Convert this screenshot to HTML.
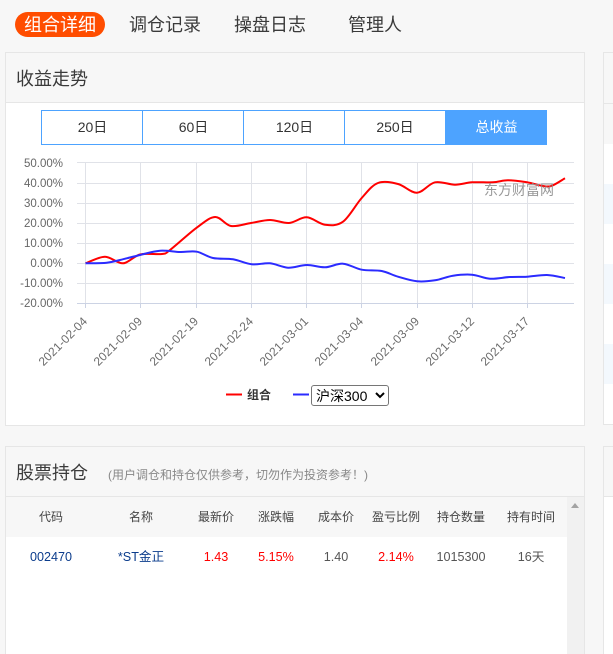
<!DOCTYPE html>
<html lang="zh-CN">
<head>
<meta charset="utf-8">
<title>组合详细</title>
<style>
html,body{margin:0;padding:0;width:613px;height:654px;overflow:hidden;}
body{background:#f7f7f7;font-family:"Liberation Sans","Noto Sans CJK SC",sans-serif;color:#333;}
#wrap{position:relative;width:613px;height:654px;overflow:hidden;background:#f7f7f7;}
.a{position:absolute;white-space:nowrap;}
.tab{font-size:18px;line-height:25px;top:13px;color:#3a3a3a;}
.pill{left:15px;top:12px;width:90px;height:25px;background:#ff4d00;border-radius:13px;color:#fff;text-align:center;font-size:18px;line-height:25px;}
.pill span{position:relative;top:1px;}
.panel{box-sizing:border-box;border:1px solid #e6e6e6;background:#fff;}
.head{background:#f7f7f7;}
.line{background:#e6e6e6;height:1px;}
.title{font-size:18px;line-height:26px;color:#3a3a3a;}
.btn{box-sizing:border-box;top:110px;height:35px;border:1px solid #4da3ff;border-right:none;text-align:center;font-size:14px;line-height:33px;color:#333;background:#fff;}
.th,.td{transform:translateX(-50%);line-height:16px;}
.th{top:509px;color:#444;font-size:12px;}
.td{top:549px;color:#555;font-size:12.6px;}
.red{color:#f00;}
.blue{color:#0b3c8c;}
svg text{font-family:"Liberation Sans","Noto Sans CJK SC",sans-serif;}
</style>
</head>
<body>
<div id="wrap">
<div class="a pill"><span>组合详细</span></div>
<div class="a tab" style="left:129px">调仓记录</div>
<div class="a tab" style="left:234px">操盘日志</div>
<div class="a tab" style="left:348px">管理人</div>

<!-- panel 1 -->
<div class="a panel" style="left:5px;top:52px;width:580px;height:374px"></div>
<div class="a head" style="left:6px;top:53px;width:578px;height:49px"></div>
<div class="a line" style="left:6px;top:102px;width:578px"></div>
<div class="a title" style="left:16px;top:66px">收益走势</div>

<div class="a btn" style="left:41px;width:102px">20日</div>
<div class="a btn" style="left:142px;width:102px">60日</div>
<div class="a btn" style="left:243px;width:102px">120日</div>
<div class="a btn" style="left:344px;width:102px;border-right:1px solid #4da3ff">250日</div>
<div class="a btn" style="left:446px;width:101px;background:#4da3ff;color:#fff;border:none;line-height:35px">总收益</div>

<svg class="a" style="left:0;top:150px" width="585" height="270" viewBox="0 150 585 270">
  <g stroke="#e0e2e8" stroke-width="1" fill="none" shape-rendering="crispEdges">
    <path d="M77 162.5H574M77 183.5H574M77 203.5H574M77 223.5H574M77 243.5H574M77 263.5H574M77 283.5H574"/>
    <path d="M85.5 162V303M140.5 162V303M196.5 162V303M251.5 162V303M306.5 162V303M361.5 162V303M417.5 162V303M472.5 162V303M527.5 162V303"/>
  </g>
  <g stroke="#ccd3e4" stroke-width="1" fill="none" shape-rendering="crispEdges">
    <path d="M77 303.5H574"/>
    <path d="M85.5 303V308M140.5 303V308M196.5 303V308M251.5 303V308M306.5 303V308M361.5 303V308M417.5 303V308M472.5 303V308M527.5 303V308"/>
  </g>
  <g font-size="11.5" fill="#666" text-anchor="end">
    <text x="63" y="167">50.00%</text>
    <text x="63" y="187">40.00%</text>
    <text x="63" y="207">30.00%</text>
    <text x="63" y="227">20.00%</text>
    <text x="63" y="247">10.00%</text>
    <text x="63" y="267">0.00%</text>
    <text x="63" y="287">-10.00%</text>
    <text x="63" y="307">-20.00%</text>
  </g>
  <g font-size="12" fill="#6c6c6c" text-anchor="end">
    <text transform="translate(88,322) rotate(-45)" textLength="63">2021-02-04</text>
    <text transform="translate(143,322) rotate(-45)" textLength="63">2021-02-09</text>
    <text transform="translate(199,322) rotate(-45)" textLength="63">2021-02-19</text>
    <text transform="translate(254,322) rotate(-45)" textLength="63">2021-02-24</text>
    <text transform="translate(309,322) rotate(-45)" textLength="63">2021-03-01</text>
    <text transform="translate(364,322) rotate(-45)" textLength="63">2021-03-04</text>
    <text transform="translate(420,322) rotate(-45)" textLength="63">2021-03-09</text>
    <text transform="translate(475,322) rotate(-45)" textLength="63">2021-03-12</text>
    <text transform="translate(530,322) rotate(-45)" textLength="63">2021-03-17</text>
  </g>
  <path id="r" fill="none" stroke="#ff0000" stroke-width="2" stroke-linejoin="round" d="M85.5 263.3L105 256.7L123 263.3L140 254.5L162 254L170 250L196.7 227.7L215 217L231 226L251 223L270 220L289 223L306.7 217.3L325 224.7L343 221.7L361.7 198L378 183L398 184L417 192.7L435 182.3L455 184.7L472 182.3L493 182.3L508 180.3L527 182.3L543 186L552 185.7L565 178.3"/>
  <path id="b" fill="none" stroke="#2b2bff" stroke-width="2" stroke-linejoin="round" d="M85.5 263.3L106.7 262.7L120 260L140 255L160 250.7L180 252L196.7 251.7L213 258L233 259.3L251.7 264.3L270 263.3L288 267.7L306.7 265L325 267.3L343 263.7L361.7 269.7L381.7 271L398 276.7L417 281.3L435 280.3L453 275.7L472 274.7L490 278.7L510 277L527 276.7L547 275L565 278"/>
  <text x="484" y="195" font-size="14" fill="#8f8f8f" opacity=".9">东方财富网</text>
  <path d="M226 394.5H242" stroke="#f00" stroke-width="2"/>
  <text x="247" y="399" font-size="12" font-weight="bold" fill="#333">组合</text>
  <path d="M293 394.5H309" stroke="#2b2bff" stroke-width="2"/>
</svg>
<select class="a" style="left:311px;top:385px;width:78px;height:21px;font-size:14px;font-family:'Liberation Sans','Noto Sans CJK SC',sans-serif;padding:0;background:#fff;color:#000;border:1px solid #767676;border-radius:3px;"><option>沪深300</option></select>

<!-- panel 2 -->
<div class="a panel" style="left:5px;top:446px;width:580px;height:220px"></div>
<div class="a head" style="left:6px;top:447px;width:578px;height:49px"></div>
<div class="a line" style="left:6px;top:496px;width:578px"></div>
<div class="a title" style="left:16px;top:460px">股票持仓</div>
<div class="a" style="left:108px;top:467px;font-size:12px;line-height:16px;color:#888">(用户调仓和持仓仅供参考，切勿作为投资参考！)</div>
<div class="a" style="left:6px;top:497px;width:561px;height:40px;background:#f7f7f7"></div>
<div class="a" style="left:567px;top:497px;width:17px;height:157px;background:#f1f1f1"></div>
<div class="a" style="left:571px;top:503px;width:0;height:0;border-left:4px solid transparent;border-right:4px solid transparent;border-bottom:5px solid #a3a3a3"></div>

<div class="a th" style="left:51px">代码</div>
<div class="a th" style="left:141px">名称</div>
<div class="a th" style="left:216px">最新价</div>
<div class="a th" style="left:276px">涨跌幅</div>
<div class="a th" style="left:336px">成本价</div>
<div class="a th" style="left:396px">盈亏比例</div>
<div class="a th" style="left:461px">持仓数量</div>
<div class="a th" style="left:531px">持有时间</div>

<div class="a td blue" style="left:51px">002470</div>
<div class="a td blue" style="left:141px">*ST金正</div>
<div class="a td red" style="left:216px">1.43</div>
<div class="a td red" style="left:276px">5.15%</div>
<div class="a td" style="left:336px">1.40</div>
<div class="a td red" style="left:396px">2.14%</div>
<div class="a td" style="left:461px">1015300</div>
<div class="a td" style="left:531px">16天</div>

<!-- right panels -->
<div class="a panel" style="left:603px;top:52px;width:30px;height:373px"></div>
<div class="a head" style="left:604px;top:53px;width:9px;height:50px"></div>
<div class="a line" style="left:604px;top:103px;width:9px"></div>
<div class="a" style="left:604px;top:104px;width:9px;height:40px;background:#f7f7f7"></div>
<div class="a" style="left:604px;top:184px;width:9px;height:40px;background:#f3f8fd"></div>
<div class="a" style="left:604px;top:264px;width:9px;height:40px;background:#f3f8fd"></div>
<div class="a" style="left:604px;top:344px;width:9px;height:40px;background:#f3f8fd"></div>
<div class="a panel" style="left:603px;top:446px;width:30px;height:220px"></div>
<div class="a head" style="left:604px;top:447px;width:9px;height:49px"></div>
<div class="a line" style="left:604px;top:496px;width:9px"></div>
</div>

<script>
["r","b"].forEach(function(id){
  var el=document.getElementById(id);
  var p=el.getAttribute("d").replace("M","").split("L").map(function(s){return s.split(" ").map(Number);});
  var d="M"+p[0][0]+" "+p[0][1];
  for(var i=0;i<p.length-1;i++){
    var a=p[Math.max(i-1,0)],b=p[i],c=p[i+1],e=p[Math.min(i+2,p.length-1)];
    d+="C"+(b[0]+(c[0]-a[0])/6).toFixed(1)+" "+(b[1]+(c[1]-a[1])/6).toFixed(1)+" "+(c[0]-(e[0]-b[0])/6).toFixed(1)+" "+(c[1]-(e[1]-b[1])/6).toFixed(1)+" "+c[0]+" "+c[1];
  }
  el.setAttribute("d",d);
});
</script>
</body>
</html>
